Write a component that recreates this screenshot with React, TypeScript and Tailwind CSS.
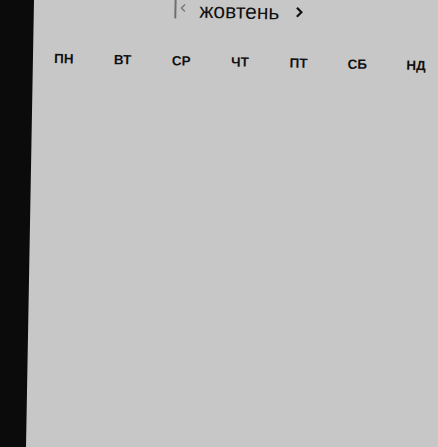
const days = ["ПН", "ВТ", "СР", "ЧТ", "ПТ", "СБ", "НД"]

export default function App() {
  return (
    <div className="w-[438px] h-[447px] bg-[#0b0b0b] overflow-hidden font-['Liberation_Sans',Arial,sans-serif]">
      <div className="flex flex-col w-full h-full bg-[#c7c7c7] [clip-path:polygon(34px_0,100%_0,100%_100%,26px_100%)]">
        <div className="-mt-[4px] pl-[35px] -mr-[8px] rotate-[1.1deg] origin-left">
          {/* month header */}
          <div className="flex items-start h-[22px]">
            <div className="ml-[139px] w-[2px] h-[19px] bg-[#6f6f6f]" />
            <svg className="ml-[3px] mt-[4px]" width="7" height="9" viewBox="0 0 7 9">
              <path d="M5.5 1 L2 4.5 L5.5 8" fill="none" stroke="#7c7c7c" strokeWidth="1.6" />
            </svg>
            <span className="ml-[13px] -mt-[2px] text-[21px] leading-[26px] text-[#111]">жовтень</span>
            <svg className="ml-[16px] mt-[5px]" width="8" height="11" viewBox="0 0 8 11">
              <path d="M1.5 1 L6 5.5 L1.5 10" fill="none" stroke="#111" strokeWidth="2.2" />
            </svg>
          </div>
          {/* weekday names */}
          <div className="grid grid-cols-7 mt-[33px]">
            {days.map((d) => (
              <div key={d} className="text-center text-[13.5px] font-bold text-[#111] leading-none">
                {d}
              </div>
            ))}
          </div>
        </div>
      </div>
    </div>
  )
}
